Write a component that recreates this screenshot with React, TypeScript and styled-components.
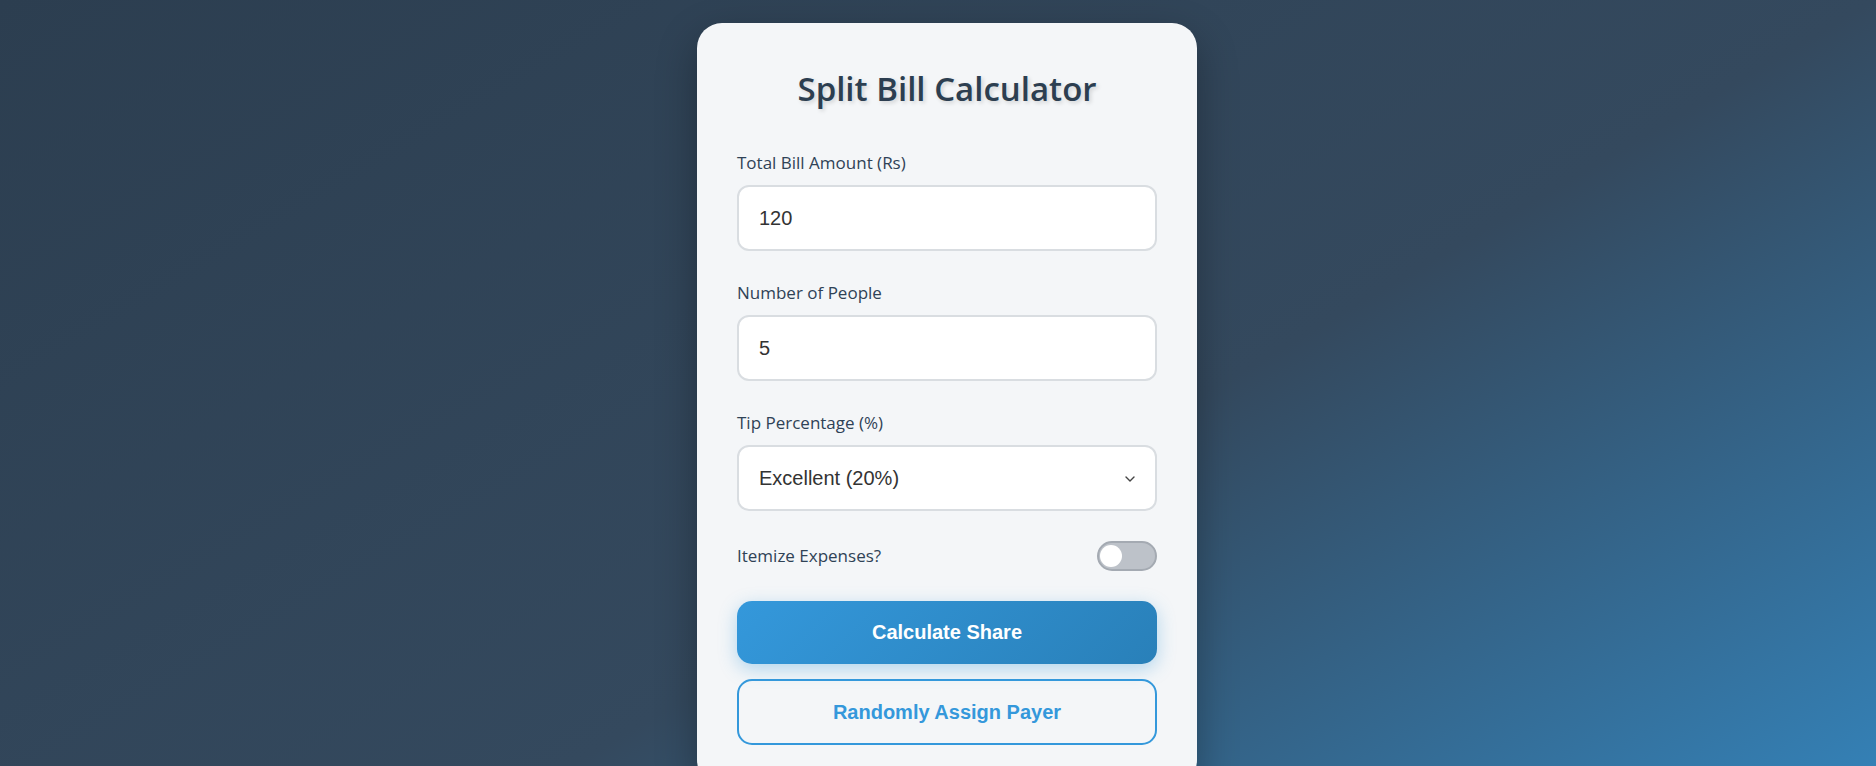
import React, { useState } from 'react';
import styled, { createGlobalStyle } from 'styled-components';

const GlobalStyle = createGlobalStyle`
  html, body { margin: 0; padding: 0; }
  body {
    background: #2c3e50;
    font-family: "Open Sans", "Noto Sans", sans-serif;
  }
  * { box-sizing: border-box; }
`;

const Page = styled.main`
  display: flex;
  justify-content: center;
  align-items: flex-start;
  min-height: 1100px;
  padding: 23px 0 40px 18px;
  background: linear-gradient(to bottom right, #2c3e50, #34495e, #3498db);
`;

const Card = styled.section`
  width: 500px;
  padding: 40px;
  background: #f4f6f8;
  border-radius: 25px;
  box-shadow: 0 15px 40px rgba(0, 0, 0, 0.3);
`;

const Title = styled.h1`
  margin: 5px 0 41px;
  text-align: center;
  font-size: 33px;
  line-height: 42px;
  font-weight: 600;
  color: #2c3e50;
  text-shadow: 2px 2px 4px rgba(0, 0, 0, 0.15);
`;

const Field = styled.div`
  display: flex;
  flex-direction: column;
  gap: 10px;
  margin-bottom: 30px;
`;

const Label = styled.label`
  font-size: 17px;
  line-height: 24px;
  font-weight: 500;
  color: #2f4256;
`;

const TextInput = styled.input`
  width: 100%;
  height: 66px;
  padding: 0 20px;
  border: 2px solid #d9dde1;
  border-radius: 12px;
  background: #ffffff;
  font-family: "Liberation Sans", Arial, sans-serif;
  font-size: 20px;
  color: #333333;
  outline: none;
  -moz-appearance: textfield;
  &::-webkit-outer-spin-button,
  &::-webkit-inner-spin-button {
    -webkit-appearance: none;
    margin: 0;
  }
`;

const SelectWrap = styled.div`
  position: relative;
`;

const Select = styled.select`
  width: 100%;
  height: 66px;
  padding: 0 20px;
  border: 2px solid #d9dde1;
  border-radius: 12px;
  background: #ffffff;
  font-family: "Liberation Sans", Arial, sans-serif;
  font-size: 20px;
  color: #333333;
  appearance: none;
  outline: none;
`;

const Chevron = styled.svg`
  position: absolute;
  right: 22px;
  top: 50%;
  width: 10px;
  height: 6px;
  margin-top: -2px;
  pointer-events: none;
`;

const ToggleRow = styled.div`
  display: flex;
  align-items: center;
  justify-content: space-between;
  height: 30px;
  margin-bottom: 30px;
`;

const ToggleTrack = styled.button<{ $on: boolean }>`
  position: relative;
  width: 60px;
  height: 30px;
  padding: 0;
  border: 2px solid ${(p) => (p.$on ? '#2a85c2' : '#a4aab2')};
  border-radius: 15px;
  background: ${(p) => (p.$on ? '#3498db' : '#bdc2c9')};
  cursor: pointer;
`;

const ToggleKnob = styled.span<{ $on: boolean }>`
  position: absolute;
  top: 2px;
  left: ${(p) => (p.$on ? '33px' : '1px')};
  width: 22px;
  height: 22px;
  border-radius: 50%;
  background: #ffffff;
`;

const Actions = styled.div`
  display: flex;
  flex-direction: column;
  gap: 15px;
`;

const PrimaryButton = styled.button`
  width: 100%;
  height: 63px;
  border: none;
  border-radius: 15px;
  background: linear-gradient(135deg, #3498db, #2980b9);
  box-shadow: 0 5px 18px rgba(52, 152, 219, 0.35);
  color: #ffffff;
  font-family: "Liberation Sans", Arial, sans-serif;
  font-weight: 700;
  font-size: 20px;
  cursor: pointer;
`;

const OutlineButton = styled.button`
  width: 100%;
  height: 66px;
  border: 2px solid #3498db;
  border-radius: 15px;
  background: transparent;
  color: #3498db;
  font-family: "Liberation Sans", Arial, sans-serif;
  font-weight: 700;
  font-size: 20px;
  cursor: pointer;
`;

export default function App() {
  const [bill, setBill] = useState('120');
  const [people, setPeople] = useState('5');
  const [tip, setTip] = useState('20');
  const [itemize, setItemize] = useState(false);

  return (
    <>
      <GlobalStyle />
      <Page>
        <Card>
          <Title>Split Bill Calculator</Title>

          <Field>
            <Label htmlFor="bill">Total Bill Amount (Rs)</Label>
            <TextInput id="bill" type="number" value={bill} onChange={(e) => setBill(e.target.value)} />
          </Field>

          <Field>
            <Label htmlFor="people">Number of People</Label>
            <TextInput id="people" type="number" value={people} onChange={(e) => setPeople(e.target.value)} />
          </Field>

          <Field>
            <Label htmlFor="tip">Tip Percentage (%)</Label>
            <SelectWrap>
              <Select id="tip" value={tip} onChange={(e) => setTip(e.target.value)}>
                <option value="0">No Tip (0%)</option>
                <option value="10">Good (10%)</option>
                <option value="15">Great (15%)</option>
                <option value="20">Excellent (20%)</option>
              </Select>
              <Chevron viewBox="0 0 10 6" fill="none">
                <path d="M1 1l4 4 4-4" stroke="#444" strokeWidth="1.4" strokeLinecap="round" strokeLinejoin="round" />
              </Chevron>
            </SelectWrap>
          </Field>

          <ToggleRow>
            <Label as="span">Itemize Expenses?</Label>
            <ToggleTrack $on={itemize} onClick={() => setItemize(!itemize)} aria-label="Itemize Expenses">
              <ToggleKnob $on={itemize} />
            </ToggleTrack>
          </ToggleRow>

          <Actions>
            <PrimaryButton>Calculate Share</PrimaryButton>
            <OutlineButton>Randomly Assign Payer</OutlineButton>
          </Actions>
        </Card>
      </Page>
    </>
  );
}
